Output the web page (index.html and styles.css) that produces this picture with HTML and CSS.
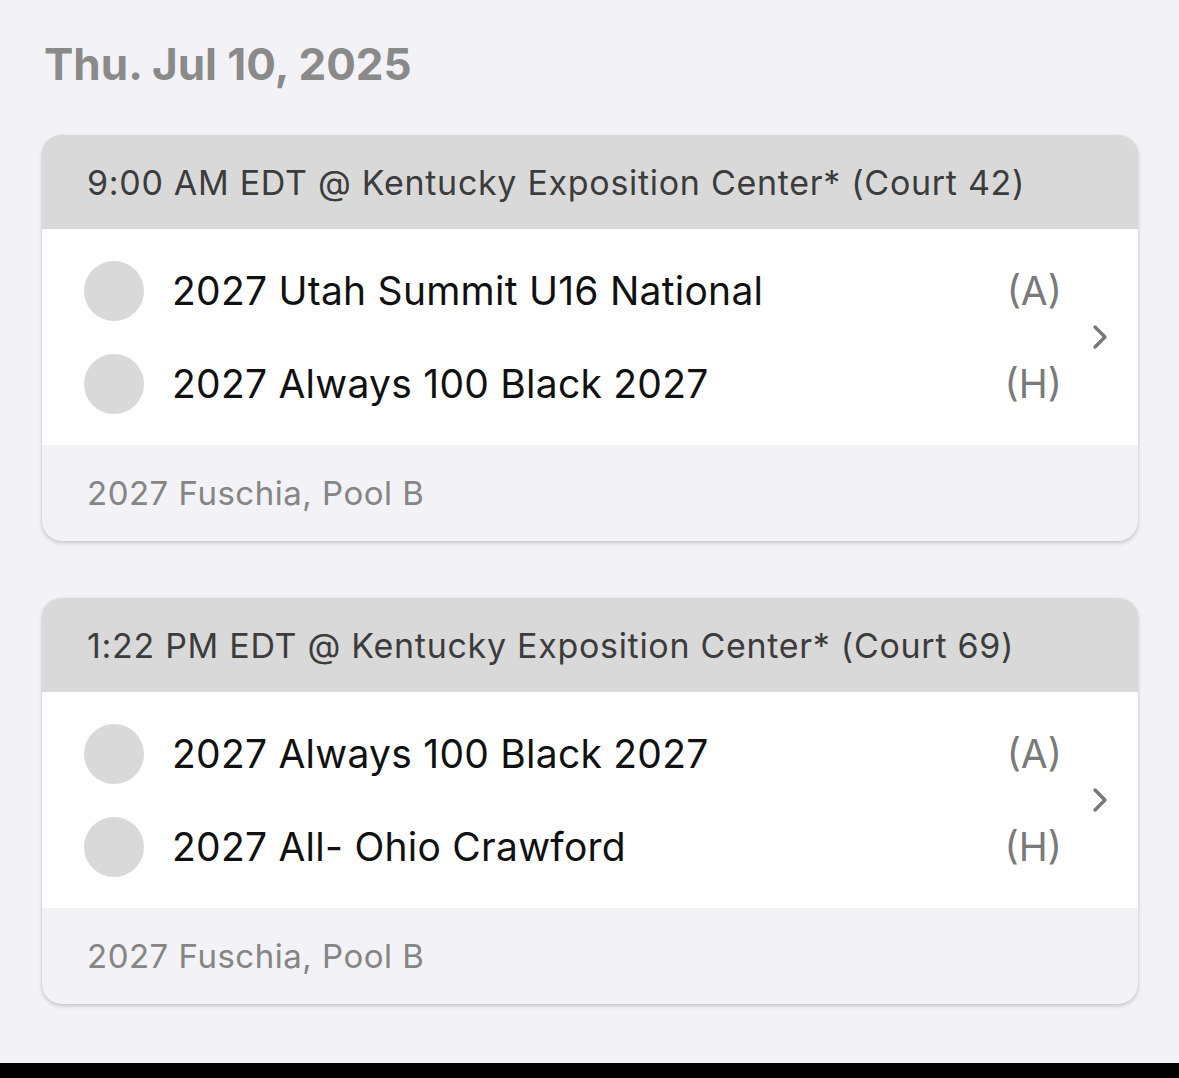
FILE: index.html
```html
<!DOCTYPE html>
<html>
<head>
<meta charset="utf-8">
<link rel="stylesheet" href="styles.css">
</head>
<body>
<div class="screen">
  <main class="content">
    <h1 class="date">Thu. Jul 10, 2025</h1>

    <section class="card">
      <div class="card-head">9:00 AM EDT @ Kentucky Exposition Center* (Court 42)</div>
      <div class="card-body">
        <div class="teams">
          <div class="team">
            <span class="dot"></span>
            <span class="name">2027 Utah Summit U16 National</span>
            <span class="side">(A)</span>
          </div>
          <div class="team">
            <span class="dot"></span>
            <span class="name">2027 Always 100 Black 2027</span>
            <span class="side">(H)</span>
          </div>
        </div>
        <svg class="chev" viewBox="0 0 16 26" width="16" height="26"><path d="M3 3 L13 13 L3 23" fill="none" stroke="#777777" stroke-width="3.4" stroke-linecap="round" stroke-linejoin="round"/></svg>
      </div>
      <div class="card-foot">2027 Fuschia, Pool B</div>
    </section>

    <section class="card">
      <div class="card-head">1:22 PM EDT @ Kentucky Exposition Center* (Court 69)</div>
      <div class="card-body">
        <div class="teams">
          <div class="team">
            <span class="dot"></span>
            <span class="name">2027 Always 100 Black 2027</span>
            <span class="side">(A)</span>
          </div>
          <div class="team">
            <span class="dot"></span>
            <span class="name">2027 All- Ohio Crawford</span>
            <span class="side">(H)</span>
          </div>
        </div>
        <svg class="chev" viewBox="0 0 16 26" width="16" height="26"><path d="M3 3 L13 13 L3 23" fill="none" stroke="#777777" stroke-width="3.4" stroke-linecap="round" stroke-linejoin="round"/></svg>
      </div>
      <div class="card-foot">2027 Fuschia, Pool B</div>
    </section>
  </main>
  <div class="bottom-bar"></div>
</div>
</body>
</html>
```

FILE: styles.css
```css
html, body {
  margin: 0;
  padding: 0;
  background: #f2f2f7;
}
body {
  font-family: "Inter", "Noto Sans", sans-serif;
}
.screen {
  height: 1078px;
  display: flex;
  flex-direction: column;
  overflow: hidden;
}
.content {
  flex: 1;
  padding: 0 41px 0 42px;
}
.date {
  margin: 36px 0 0 2px;
  height: 99px;
  font-size: 44px;
  font-weight: 700;
  color: #8a8a8a;
  letter-spacing: 0;
  line-height: 56px;
}
.card {
  border-radius: 20px;
  overflow: hidden;
  background: #f2f2f7;
  box-shadow: 0 2px 4px rgba(0,0,0,0.18), 0 0 1px rgba(0,0,0,0.15);
  margin-bottom: 57px;
}
.card-head {
  background: #d9d9d9;
  height: 94px;
  display: flex;
  align-items: center;
  padding-left: 45px;
  font-size: 34px;
  color: #3c3c3c;
  letter-spacing: 0.7px;
}
.card-body {
  background: #ffffff;
  height: 216px;
  display: flex;
  align-items: center;
  padding: 0 30px 0 42px;
  box-sizing: border-box;
}
.teams {
  flex: 1;
  display: flex;
  flex-direction: column;
  gap: 33px;
}
.team {
  display: flex;
  align-items: center;
  height: 60px;
}
.dot {
  width: 60px;
  height: 60px;
  border-radius: 50%;
  background: #d9d9d9;
  flex: none;
}
.name {
  flex: 1;
  margin-left: 28px;
  font-size: 39px;
  color: #111;
  letter-spacing: 0.25px;
}
.side {
  font-size: 39px;
  color: #7a7a7a;
  margin-right: 30px;
}
.chev {
  flex: none;
}
.card-foot {
  height: 96px;
  display: flex;
  align-items: center;
  padding-left: 45px;
  font-size: 33px;
  color: #858585;
  letter-spacing: 0.5px;
}
.bottom-bar {
  height: 15px;
  background: #000;
  flex: none;
}
```
